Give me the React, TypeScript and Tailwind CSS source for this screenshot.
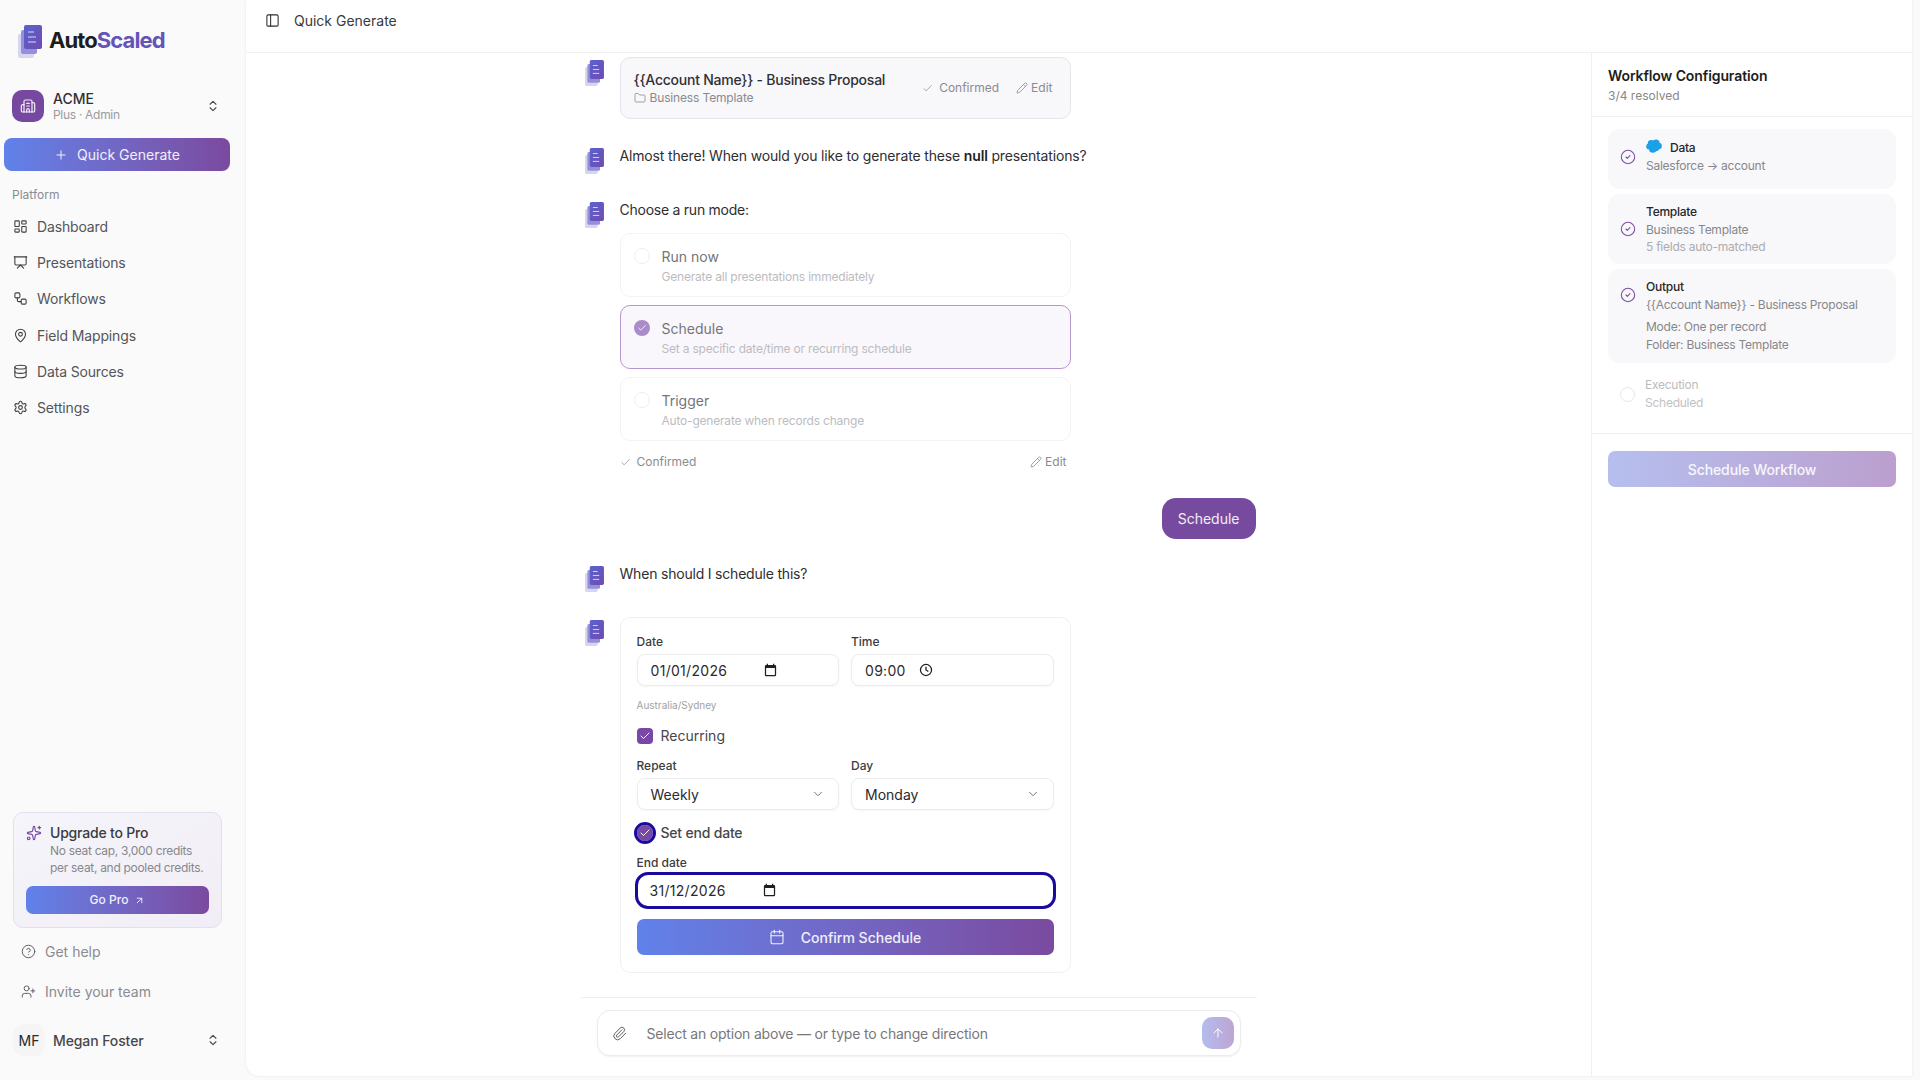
import {
  ArrowUp,
  ArrowUpRight,
  Building2,
  Calendar,
  Check,
  ChevronDown,
  ChevronsUpDown,
  CircleCheck,
  CircleHelp,
  Database,
  Folder,
  LayoutDashboard,
  MapPin,
  PanelLeft,
  Paperclip,
  Pencil,
  Plus,
  Presentation,
  Settings,
  Sparkles,
  UserPlus,
  Workflow,
} from "lucide-react";

const gradient = "bg-gradient-to-r from-[#5f82ea] to-[#7a4a9f]";

const navItems = [
  { label: "Dashboard", icon: LayoutDashboard },
  { label: "Presentations", icon: Presentation },
  { label: "Workflows", icon: Workflow },
  { label: "Field Mappings", icon: MapPin },
  { label: "Data Sources", icon: Database },
  { label: "Settings", icon: Settings },
];

const LogoMark = ({ className }: { className: string }) => (
  <svg viewBox="0 0 24 33" className={className}>
    <rect x="0" y="9" width="16" height="24" rx="2" fill="#d8d5f0" />
    <rect x="3" y="5" width="16" height="24" rx="2" fill="#9490dc" />
    <rect x="6" y="0" width="18" height="24" rx="2" fill="url(#logoFill)" />
    <path d="M10 7h6M10 12h8M10 17h8" stroke="#d9d8f5" strokeWidth="1.2" />
    <defs>
      <linearGradient id="logoFill" x1="0" y1="0" x2="1" y2="1">
        <stop offset="0" stopColor="#5a63cf" />
        <stop offset="1" stopColor="#6f4bb0" />
      </linearGradient>
    </defs>
  </svg>
);

const SalesforceCloud = () => (
  <svg viewBox="0 0 16 16" className="mr-[8px] -mt-[3px] size-[16px]" fill="#1ca0e6">
    <circle cx="5.2" cy="5.4" r="3.4" />
    <circle cx="10" cy="5" r="3.6" />
    <circle cx="12.6" cy="8" r="3.2" />
    <circle cx="3.2" cy="8.6" r="3" />
    <circle cx="6.8" cy="11" r="3.8" />
    <circle cx="10" cy="10.2" r="3" />
  </svg>
);

const PickerCalendar = () => (
  <svg viewBox="0 0 24 24" className="size-[15px] shrink-0" fill="#1f1f1f">
    <path d="M19 3h-1V1h-2v2H8V1H6v2H5a2 2 0 0 0-2 2v14a2 2 0 0 0 2 2h14a2 2 0 0 0 2-2V5a2 2 0 0 0-2-2zm0 16H5V8h14v11z" />
  </svg>
);

const PickerClock = () => (
  <svg viewBox="0 0 24 24" className="size-[14px] shrink-0" fill="none" stroke="#1f1f1f" strokeWidth="2.2">
    <circle cx="12" cy="12" r="9.5" />
    <path d="M12 6.5V12l4 2.5" />
  </svg>
);

const AgentRow = ({ children, className = "" }: { children: React.ReactNode; className?: string }) => (
  <div className={`flex items-start ${className}`}>
    <LogoMark className="mt-[3px] ml-[15px] h-[26px] w-[19px] shrink-0" />
    <div className="ml-[16px] min-w-0 flex-1">{children}</div>
  </div>
);

const RunOption = ({
  title,
  description,
  selected,
}: {
  title: string;
  description: string;
  selected?: boolean;
}) => (
  <div
    className={`flex h-[64px] w-[451px] items-start rounded-[10px] border px-[13px] pt-[13px] ${
      selected ? "border-[#b497d0] bg-[#faf7fc]" : "border-[#f3f3f4] bg-white"
    }`}
  >
    {selected ? (
      <span className="mt-[1px] flex size-4 items-center justify-center rounded-full bg-[#ab8ccb]">
        <Check className="size-2.5 text-white" strokeWidth={2} />
      </span>
    ) : (
      <span className="mt-[1px] size-4 rounded-full border border-[#eeeeef]" />
    )}
    <div className="ml-[12px]">
      <div className="text-[14px] leading-[20px] text-[#757578]">{title}</div>
      <div className="mt-[1px] text-[12px] leading-[18px] tracking-[-0.2px] text-[#bcbcbf]">{description}</div>
    </div>
  </div>
);

const Field = ({ label, children, className = "" }: { label: string; children: React.ReactNode; className?: string }) => (
  <div className={className}>
    <div className="text-[12px] leading-[16px] font-medium text-[#3c3c40]">{label}</div>
    {children}
  </div>
);

const boxClass =
  "mt-[4px] flex h-[32px] items-center rounded-[8px] border border-[#ececee] bg-white px-[13px] text-[14px] text-[#2a2a2d] shadow-[0_1px_2px_rgba(0,0,0,0.04)]";

const ConfigItem = ({
  title,
  lines,
  className = "",
  icon,
}: {
  title: React.ReactNode;
  lines: React.ReactNode;
  className?: string;
  icon?: React.ReactNode;
}) => (
  <div className={`flex items-center rounded-[12px] bg-[#f8f7fa] pl-[12px] tracking-[-0.25px] ${className}`}>
    {icon ?? <CircleCheck className="size-[16px] shrink-0 text-[#7b4ea3]" strokeWidth={1.6} />}
    <div className="ml-[10px]">
      <div className="text-[12px] leading-[18px] font-medium text-[#26262a]">{title}</div>
      {lines}
    </div>
  </div>
);

export default function App() {
  return (
    <div className="flex h-[1080px] w-[1920px] overflow-hidden bg-[#fafafa] font-['Inter',sans-serif] text-[#2a2a2d]">
      {/* sidebar */}
      <aside className="flex w-[246px] shrink-0 flex-col">
        <div className="flex h-[82px] items-start pt-[25px] pl-[18px]">
          <LogoMark className="h-[33px] w-[24px]" />
          <div className="ml-[7px] text-[22px] leading-[30px] font-bold tracking-[-0.9px] text-[#1d1d20]">
            Auto<span className="text-[#6554b8]">Scaled</span>
          </div>
        </div>

        <div className="mt-[8px] flex h-[32px] items-center pr-[26px] pl-[12px]">
          <div className="flex size-[32px] items-center justify-center rounded-[10px] bg-[#77489f]">
            <Building2 className="size-4 text-white/90" strokeWidth={1.8} />
          </div>
          <div className="ml-[9px] flex-1">
            <div className="text-[14px] leading-[16px] font-medium text-[#303034]">ACME</div>
            <div className="text-[12px] leading-[15px] tracking-[-0.3px] text-[#9a9a9e]">Plus · Admin</div>
          </div>
          <ChevronsUpDown className="size-[14px] text-[#4a4a4e]" />
        </div>

        <button className={`mt-[16px] ml-[4px] flex h-[33px] w-[226px] items-center justify-center rounded-[8px] text-[14px] text-white/90 ${gradient}`}>
          <Plus className="mr-[9px] size-[14px]" strokeWidth={1.7} />
          Quick Generate
        </button>

        <div className="mt-[16px] pl-[12px] text-[12px] leading-[16px] text-[#8c8c90]">Platform</div>

        <nav className="mt-[5px] flex flex-col">
          {navItems.map(({ label, icon: Icon }) => (
            <div key={label} className="flex h-[36.3px] items-center pl-[13px] text-[14px] tracking-[-0.15px] text-[#555559]">
              <Icon className="size-[15px] text-[#3f3f43]" strokeWidth={1.7} />
              <span className="ml-[9px]">{label}</span>
            </div>
          ))}
        </nav>

        <div className="mt-auto">
          <div className="mx-[13px] h-[116px] w-[209px] rounded-[10px] border border-[#e4dfee] bg-gradient-to-br from-[#f6f5fb] to-[#f1edf6] px-[12px] pt-[11px]">
            <div className="flex items-start">
              <Sparkles className="mt-[1px] size-[16px] shrink-0 text-[#7748a5]" strokeWidth={1.7} />
              <div className="ml-[8px]">
                <div className="text-[14px] leading-[18px] font-medium tracking-[-0.2px] text-[#3a3a3e]">Upgrade to Pro</div>
                <div className="mt-[1px] text-[12px] leading-[16.5px] tracking-[-0.3px] whitespace-nowrap text-[#87878b]">
                  No seat cap, 3,000 credits
                  <br />
                  per seat, and pooled credits.
                </div>
              </div>
            </div>
            <button className={`mt-[10px] flex h-[28px] w-full items-center justify-center rounded-[7px] text-[12px] font-medium text-white/90 ${gradient}`}>
              Go Pro
              <ArrowUpRight className="ml-[6px] size-[11px]" />
            </button>
          </div>

          <div className="mt-[3px] flex h-[40px] items-center pl-[21px] text-[14px] text-[#8b8b8f]">
            <CircleHelp className="size-[15px] text-[#626266]" strokeWidth={1.6} />
            <span className="ml-[9px]">Get help</span>
          </div>
          <div className="flex h-[40px] items-center pl-[21px] text-[14px] text-[#8b8b8f]">
            <UserPlus className="size-[15px] text-[#626266]" strokeWidth={1.6} />
            <span className="ml-[9px]">Invite your team</span>
          </div>

          <div className="mt-[13px] mb-[24px] flex h-[32px] items-center pr-[26px] pl-[13px]">
            <div className="flex size-[32px] items-center justify-center rounded-[10px] bg-[#f5f5f5] text-[14px] text-[#2a2a2d]">MF</div>
            <div className="ml-[8px] flex-1 text-[14px] font-medium tracking-[-0.1px] text-[#47474b]">Megan Foster</div>
            <ChevronsUpDown className="size-[14px] text-[#4a4a4e]" />
          </div>
        </div>
      </aside>

      {/* main panel */}
      <main className="mr-[8px] mb-[4px] flex min-w-0 flex-1 flex-col rounded-bl-[14px] bg-white shadow-[0_0_3px_rgba(0,0,0,0.08)]">
        <header className="flex h-[53px] shrink-0 items-center border-b border-[#f0f0f0] pb-[11px] pl-[19px]">
          <PanelLeft className="size-[15px] text-[#2f2f33]" strokeWidth={1.7} />
          <span className="ml-[14px] text-[14px] text-[#3a3a3e]">Quick Generate</span>
        </header>

        <div className="flex min-h-0 flex-1">
          {/* chat */}
          <section className="flex min-w-0 flex-1 flex-col items-center">
            <div className="w-[686px] translate-x-[-6px]">
              <AgentRow className="mt-[4px]">
                <div className="flex h-[62px] w-[451px] items-center justify-between rounded-[10px] border border-[#e6e3ec] bg-[#f8f7fa] pr-[17px] pl-[13px]">
                  <div>
                    <div className="text-[14px] leading-[20px] font-medium tracking-[-0.24px] text-[#303034]">{"{{Account Name}} - Business Proposal"}</div>
                    <div className="flex items-center text-[12px] leading-[16px] tracking-[-0.15px] text-[#8b8b8f]">
                      <Folder className="mr-[4px] size-[12px]" strokeWidth={1.6} />
                      Business Template
                    </div>
                  </div>
                  <div className="flex items-center text-[12px] text-[#8b8b8f]">
                    <Check className="mr-[6px] size-[11px]" strokeWidth={1.6} />
                    Confirmed
                    <Pencil className="mr-[3px] ml-[17px] size-[12px]" strokeWidth={1.6} />
                    Edit
                  </div>
                </div>
              </AgentRow>

              <AgentRow className="mt-[26px]">
                <p className="text-[14px] leading-[22px] tracking-[-0.16px] text-[#2e2e31]">
                  Almost there! When would you like to generate these <b className="font-semibold text-[#1d1d20]">null</b> presentations?
                </p>
              </AgentRow>

              <AgentRow className="mt-[25px]">
                <p className="text-[14px] leading-[22px] tracking-[-0.25px] text-[#2e2e31]">Choose a run mode:</p>
                <div className="mt-[12px] flex flex-col gap-[8px]">
                  <RunOption title="Run now" description="Generate all presentations immediately" />
                  <RunOption title="Schedule" description="Set a specific date/time or recurring schedule" selected />
                  <RunOption title="Trigger" description="Auto-generate when records change" />
                </div>
                <div className="mt-[12px] flex w-[451px] items-center pr-[4px] text-[12px] leading-[18px] text-[#8b8b8f]">
                  <Check className="mr-[6px] size-[11px]" strokeWidth={1.6} />
                  Confirmed
                  <Pencil className="mr-[3px] ml-auto size-[12px]" strokeWidth={1.6} />
                  Edit
                </div>
              </AgentRow>

              <div className="mt-[27px] flex justify-end">
                <div className="flex h-[41px] items-center rounded-[14px] bg-[#764a9e] px-[16px] text-[14px] text-white/90">Schedule</div>
              </div>

              <AgentRow className="mt-[24px]">
                <p className="text-[14px] leading-[22px] tracking-[-0.2px] text-[#2e2e31]">When should I schedule this?</p>
              </AgentRow>

              <AgentRow className="mt-[25px]">
                <div className="h-[356px] w-[451px] rounded-[10px] border border-[#f1f1f2] bg-white px-[16px] pt-[16px]">
                  <div className="grid grid-cols-2 gap-x-[12px]">
                    <Field label="Date">
                      <div className={boxClass}>
                        <span className="w-[112px] tracking-[0.3px]">01/01/2026</span>
                        <PickerCalendar />
                      </div>
                    </Field>
                    <Field label="Time">
                      <div className={boxClass}>
                        <span className="mr-[13px] tracking-[0.3px]">09:00</span>
                        <PickerClock />
                      </div>
                    </Field>
                  </div>
                  <div className="mt-[12px] text-[10px] leading-[14px] text-[#a2a2a6]">Australia/Sydney</div>
                  <div className="mt-[14px] flex items-center text-[14px] leading-[20px] text-[#47474b]">
                    <span className="flex size-4 items-center justify-center rounded-[4px] bg-[#7748a5]">
                      <Check className="size-3 text-white" strokeWidth={2} />
                    </span>
                    <span className="ml-[8px]">Recurring</span>
                  </div>
                  <div className="mt-[12px] grid grid-cols-2 gap-x-[12px]">
                    <Field label="Repeat">
                      <div className={`${boxClass} justify-between`}>
                        Weekly
                        <ChevronDown className="size-[14px] text-[#6c6c70]" strokeWidth={1.6} />
                      </div>
                    </Field>
                    <Field label="Day">
                      <div className={`${boxClass} justify-between`}>
                        Monday
                        <ChevronDown className="size-[14px] text-[#6c6c70]" strokeWidth={1.6} />
                      </div>
                    </Field>
                  </div>
                  <div className="mt-[13px] flex items-center text-[14px] leading-[20px] font-medium tracking-[-0.2px] text-[#47474b]">
                    <span className="flex size-4 items-center justify-center rounded-full bg-[#7748a5] outline-[3px] outline-[#1a0b9e]">
                      <Check className="size-3 text-white" strokeWidth={2} />
                    </span>
                    <span className="ml-[8px]">Set end date</span>
                  </div>
                  <Field label="End date" className="mt-[12px]">
                    <div className="mx-[1px] mt-[4px] flex h-[31px] items-center rounded-[10px] bg-white px-[12px] text-[14px] text-[#2a2a2d] outline-[3px] outline-[#1a0b9e]">
                      <span className="w-[112px] tracking-[0.3px]">31/12/2026</span>
                      <PickerCalendar />
                    </div>
                  </Field>
                  <button className={`mt-[13px] flex h-[36px] w-full items-center justify-center rounded-[7px] text-[14px] font-medium text-white/90 ${gradient}`}>
                    <Calendar className="mr-[16px] size-[16px]" strokeWidth={1.6} />
                    Confirm Schedule
                  </button>
                </div>
              </AgentRow>
            </div>

            <div className="mt-auto h-[79px] w-[676px] border-t border-[#f0f0f0] pt-[12px]">
              <div className="mx-auto flex h-[46px] w-[644px] items-center rounded-[13px] border border-[#ececee] bg-white pr-[6px] pl-[14px] text-[14px] tracking-[-0.2px] text-[#77777b] shadow-[0_1px_2px_rgba(0,0,0,0.06)]">
                <Paperclip className="size-[15px] text-[#5f5f63]" strokeWidth={1.6} />
                <span className="ml-[20px] flex-1">Select an option above — or type to change direction</span>
                <span className="flex size-[32px] items-center justify-center rounded-[10px] bg-gradient-to-r from-[#b4bcee] to-[#bda5d2]">
                  <ArrowUp className="size-[14px] text-white" strokeWidth={1.7} />
                </span>
              </div>
            </div>
          </section>

          {/* workflow config */}
          <aside className="flex w-[321px] shrink-0 flex-col border-l border-[#f0f0f0]">
            <div className="h-[64px] border-b border-[#f0f0f0] px-[16px] pt-[13px]">
              <div className="text-[14px] leading-[20px] font-semibold tracking-[-0.1px] text-[#1d1d20]">Workflow Configuration</div>
              <div className="mt-[1px] text-[12px] leading-[18px] text-[#87878b]">3/4 resolved</div>
            </div>
            <div className="flex h-[317px] flex-col gap-[5px] border-b border-[#f0f0f0] px-[16px] pt-[12px]">
              <ConfigItem
                className="h-[60px] pb-[5px]"
                title={
                  <span className="flex items-center">
                    <SalesforceCloud />
                    Data
                  </span>
                }
                lines={<div className="text-[12px] leading-[18px] text-[#87878b]">Salesforce → account</div>}
              />
              <ConfigItem
                className="h-[70px]"
                title="Template"
                lines={
                  <>
                    <div className="text-[12px] leading-[18px] text-[#87878b]">Business Template</div>
                    <div className="text-[12px] leading-[16px] text-[#abacb0]">5 fields auto-matched</div>
                  </>
                }
              />
              <ConfigItem
                className="h-[94px] !items-start pt-[9px]"
                icon={<CircleCheck className="mt-[9px] size-[16px] shrink-0 text-[#7b4ea3]" strokeWidth={1.6} />}
                title="Output"
                lines={
                  <>
                    <div className="text-[12px] leading-[18px] text-[#87878b]">{"{{Account Name}} - Business Proposal"}</div>
                    <div className="mt-[4px] text-[12px] leading-[18px] text-[#87878b]">Mode: One per record</div>
                    <div className="text-[12px] leading-[18px] text-[#87878b]">Folder: Business Template</div>
                  </>
                }
              />
              <ConfigItem
                className="h-[60px] !bg-white pb-[8px]"
                icon={<span className="size-[15px] shrink-0 rounded-full border border-[#e6e6e8]" />}
                title={<span className="font-normal text-[#bcbcbf]">Execution</span>}
                lines={<div className="text-[12px] leading-[18px] text-[#c2c2c5]">Scheduled</div>}
              />
            </div>
            <div className="px-[16px] pt-[17px]">
              <button className="flex h-[36px] w-full items-center justify-center rounded-[7px] bg-gradient-to-r from-[#b5bfef] to-[#bb9fce] text-[14px] font-medium tracking-[-0.1px] text-white/90">
                Schedule Workflow
              </button>
            </div>
          </aside>
        </div>
      </main>
    </div>
  );
}
